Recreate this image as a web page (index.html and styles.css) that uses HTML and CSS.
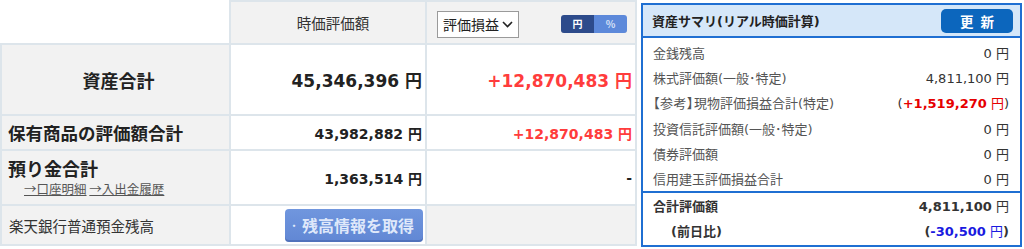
FILE: index.html
```html
<!DOCTYPE html>
<html lang="ja">
<head>
<meta charset="utf-8">
<link rel="stylesheet" href="styles.css">
</head>
<body>
<div class="page">
  <div class="asset-table">
    <div class="cell blank"></div>
    <div class="cell head">時価評価額</div>
    <div class="cell head head-ctrl">
      <div class="select">評価損益<svg class="chev" width="11" height="7" viewBox="0 0 11 7"><path d="M1 1 L5.5 5.5 L10 1" fill="none" stroke="#222" stroke-width="1.6"/></svg></div>
      <div class="toggle"><span class="tg on">円</span><span class="tg off">%</span></div>
    </div>

    <div class="cell label total-label">資産合計</div>
    <div class="cell num big">45,346,396 円</div>
    <div class="cell num big red">+12,870,483 円</div>

    <div class="cell label row-label">保有商品の評価額合計</div>
    <div class="cell num">43,982,882 円</div>
    <div class="cell num red">+12,870,483 円</div>

    <div class="cell label deposit">
      <div class="row-label-text">預り金合計</div>
      <div class="links"><a class="link">→口座明細</a> <a class="link">→入出金履歴</a></div>
    </div>
    <div class="cell num">1,363,514 円</div>
    <div class="cell num">-</div>

    <div class="cell label bank">楽天銀行普通預金残高</div>
    <div class="cell btn-cell"><button class="fetch"><span class="dot">・</span>残高情報を取得</button></div>
    <div class="cell grey"></div>
  </div>

  <div class="summary">
    <div class="sum-head">
      <span class="sum-title">資産サマリ(リアル時価計算)</span>
      <button class="update">更 新</button>
    </div>
    <div class="sum-body">
      <div class="sum-row"><span class="sl">金銭残高</span><span class="sv">0 円</span></div>
      <div class="sum-row"><span class="sl">株式評価額(一般･特定)</span><span class="sv">4,811,100 円</span></div>
      <div class="sum-row"><span class="sl"><span class="palt">【参考】</span>現物評価損益合計(特定)</span><span class="sv">(<span class="plus"><b>+1,519,270</b> 円</span>)</span></div>
      <div class="sum-row"><span class="sl">投資信託評価額(一般･特定)</span><span class="sv">0 円</span></div>
      <div class="sum-row"><span class="sl">債券評価額</span><span class="sv">0 円</span></div>
      <div class="sum-row"><span class="sl">信用建玉評価損益合計</span><span class="sv">0 円</span></div>
    </div>
    <div class="sum-foot">
      <div class="sum-row strong"><span class="sl">合計評価額</span><span class="sv"><b>4,811,100</b> 円</span></div>
      <div class="sum-row strong"><span class="sl indent">(前日比)</span><span class="sv"><b>(</b><span class="minus"><b>-30,500</b> 円</span><b>)</b></span></div>
    </div>
  </div>
</div>
</body>
</html>
```

FILE: styles.css
```css
* { box-sizing: border-box; }
html, body { margin: 0; padding: 0; background: #fff; }
body {
  font-family: "DejaVu Sans", "Noto Sans CJK JP", sans-serif;
  color: #333;
  width: 1024px;
  height: 249px;
  overflow: hidden;
}
.page {
  display: flex;
  align-items: flex-start;
}

/* ---------- left table ---------- */
.asset-table {
  width: 637px;
  display: grid;
  grid-template-columns: 227px 194px 208px;
  grid-template-rows: 41px 69px 33px 53px 38px;
  gap: 2px;
  padding: 2px;
  background: #dde5eb;
}
.cell {
  background: #fff;
  display: flex;
  align-items: center;
}
.blank {
  margin: -2px 0 0 -2px;
  background: #fff;
}
.head {
  background: #f2f2f2;
  justify-content: center;
  font-family: "Noto Sans CJK JP", sans-serif;
  font-size: 14.5px;
  color: #333;
  padding-left: 10px;
}
.head-ctrl {
  justify-content: space-between;
  padding: 0 8px 0 10px;
}
.select {
  width: 82px;
  height: 27px;
  border: 1px solid #9a9a9a;
  background: #fff;
  display: flex;
  align-items: center;
  justify-content: space-between;
  padding: 0 5px 0 5px;
  font-size: 14px;
  color: #222;
  margin-top: 3px;
}
.chev { display: block; margin-top: 1px; }
.toggle {
  display: flex;
  width: 66px;
  height: 18px;
  border-radius: 3px;
  overflow: hidden;
  margin-top: 3px;
  box-shadow: inset 0 -2px 0 rgba(0,0,0,0.18);
}
.tg {
  flex: 1;
  display: flex;
  align-items: center;
  justify-content: center;
  font-size: 10px;
  font-weight: bold;
  padding-bottom: 1px;
}
.tg.on { background: #2d4b8b; color: #fff; font-family: "Noto Sans CJK JP", sans-serif; }
.tg.off { background: #5d89da; color: #d7e2f7; }

.label {
  background: #f2f2f2;
  font-family: "Noto Sans CJK JP", sans-serif;
  color: #222;
}
.total-label {
  justify-content: center;
  font-size: 18px;
  font-weight: bold;
  padding-left: 6px;
}
.row-label {
  font-size: 17.5px;
  font-weight: bold;
  padding-left: 6px;
}
.deposit {
  flex-direction: column;
  align-items: flex-start;
  justify-content: flex-start;
  padding: 4px 0 0 6px;
}
.row-label-text {
  font-size: 18px;
  font-weight: bold;
  line-height: 26px;
}
.links {
  font-size: 12.5px;
  line-height: 16px;
  padding-left: 16px;
}
.link {
  color: #555;
  text-decoration: underline;
}
.bank {
  font-size: 14.5px;
  padding-left: 7px;
  color: #333;
}
.num {
  justify-content: flex-end;
  padding-right: 3px;
  font-size: 14px;
  font-weight: bold;
  color: #222;
}
.num.big { font-size: 17px; }
.num.red { color: #ff3c3c; }
.grey { background: #f2f2f2; }
.btn-cell {
  justify-content: flex-end;
  align-items: flex-start;
  padding: 3px 2px 0 0;
}
.fetch {
  width: 138px;
  height: 33px;
  border: none;
  border-radius: 4px;
  background: linear-gradient(#7096de, #6187d4);
  box-shadow: inset 0 -2px 0 rgba(30,50,110,0.25);
  color: #dfe8fa;
  font-family: "Noto Sans CJK JP", sans-serif;
  font-size: 16px;
  font-weight: bold;
  display: flex;
  align-items: center;
  padding: 0 0 1px 1px;
}
.dot {
  font-size: 11px;
  font-weight: normal;
  width: 16px;
  text-align: center;
}

/* ---------- summary panel ---------- */
.summary {
  width: 381px;
  height: 244px;
  margin: 3px 0 0 4px;
  border: 2px solid #1f6fd2;
  display: flex;
  flex-direction: column;
  overflow: hidden;
}
.sum-head {
  flex: 0 0 33px;
  background: #d5e7f9;
  border-bottom: 2px solid #1f6fd2;
  display: flex;
  align-items: center;
  justify-content: space-between;
  padding: 0 7px 0 9px;
}
.sum-title {
  font-size: 13px;
  font-weight: bold;
  color: #222;
}
.update {
  width: 72px;
  height: 24px;
  border: none;
  border-radius: 5px;
  background: #0c66bd;
  color: #fff;
  font-family: "Noto Sans CJK JP", sans-serif;
  font-size: 13.5px;
  font-weight: bold;
  letter-spacing: 2px;
  padding: 0 0 1px 2px;
  margin-top: 1px;
}
.sum-body {
  flex: 0 0 auto;
  padding-top: 1.5px;
}
.sum-row {
  height: 25.3px;
  display: flex;
  align-items: center;
  justify-content: space-between;
  padding: 0 11px 0 10px;
  font-size: 13px;
  color: #555;
}
.palt { font-feature-settings: "palt"; letter-spacing: 0.5px; }
.sv { color: #333; }
.plus { color: #e60000; }
.minus { color: #1a1ae0; }
.sum-foot {
  flex: 1 1 auto;
  border-top: 2px solid #1f6fd2;
  padding-top: 0;
}
.sum-foot .sum-row { height: 25px; }
.sum-row.strong .sl { color: #333; font-weight: bold; }
.indent { padding-left: 18px; }
```
